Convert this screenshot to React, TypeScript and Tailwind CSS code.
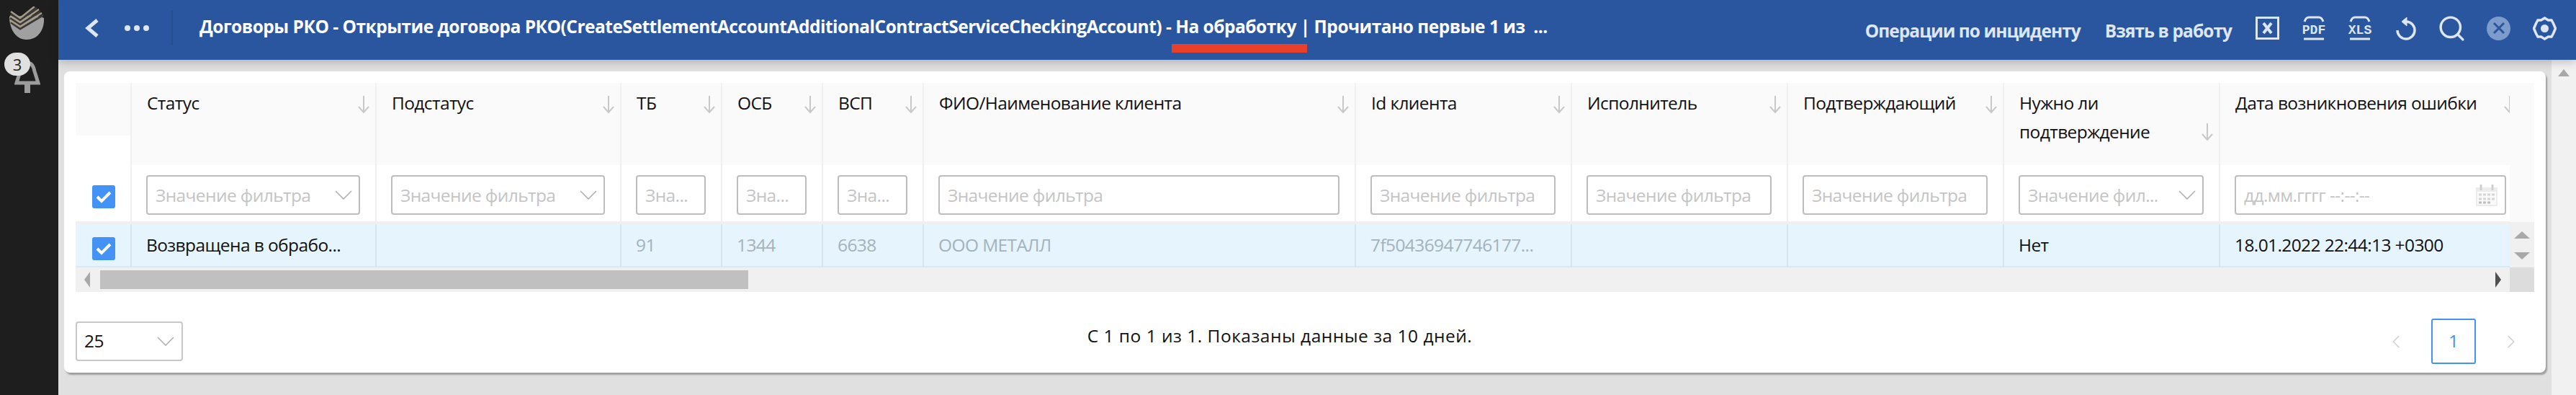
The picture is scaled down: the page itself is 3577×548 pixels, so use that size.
import { ChevronLeft, ChevronRight, Search } from "lucide-react";

const font = "font-['Open_Sans','Noto_Sans',sans-serif]";

const columns = [
  { title: "Статус", width: "w-[340px]", filter: "select", placeholder: "Значение фильтра", value: "Возвращена в обрабо..." },
  { title: "Подстатус", width: "w-[340px]", filter: "select", placeholder: "Значение фильтра", value: "" },
  { title: "ТБ", width: "w-[140px]", filter: "input", placeholder: "Зна...", value: "91", masked: true },
  { title: "ОСБ", width: "w-[140px]", filter: "input", placeholder: "Зна...", value: "1344", masked: true },
  { title: "ВСП", width: "w-[140px]", filter: "input", placeholder: "Зна...", value: "6638", masked: true },
  { title: "ФИО/Наименование клиента", width: "w-[600px]", filter: "input", placeholder: "Значение фильтра", value: "ООО МЕТАЛЛ", masked: true },
  { title: "Id клиента", width: "w-[300px]", filter: "input", placeholder: "Значение фильтра", value: "7f50436947746177...", masked: true },
  { title: "Исполнитель", width: "w-[300px]", filter: "input", placeholder: "Значение фильтра", value: "" },
  { title: "Подтверждающий", width: "w-[300px]", filter: "input", placeholder: "Значение фильтра", value: "" },
  { title: "Нужно ли подтверждение", width: "w-[300px]", filter: "select", placeholder: "Значение фил...", value: "Нет" },
  { title: "Дата возникновения ошибки", width: "w-[420px]", filter: "date", placeholder: "дд.мм.гггг --:--:--", value: "18.01.2022 22:44:13 +0300" },
];

function SortArrow({ low }: { low?: boolean }) {
  return (
    <svg className={`absolute right-[8px] ${low ? "top-[56px]" : "top-[18px]"}`} width="16" height="24" viewBox="0 0 16 24" fill="none" stroke="#c8c8c8" strokeWidth="2">
      <path d="M8 0v23M1 15l7 8 7-8" />
    </svg>
  );
}

function Check() {
  return (
    <div className="flex size-[32px] items-center justify-center rounded-[3px] bg-[#4293f5]">
      <svg width="24" height="20" viewBox="0 0 24 20" fill="none" stroke="white" strokeWidth="4">
        <path d="M3 10l6 6L21 4" />
      </svg>
    </div>
  );
}

function SelectChevron() {
  return (
    <svg width="24" height="13" viewBox="0 0 24 13" fill="none" stroke="#b0b0b0" strokeWidth="1.6" className="shrink-0">
      <path d="M1 1l11 11L23 1" />
    </svg>
  );
}

function CalendarIcon() {
  return (
    <svg width="32" height="32" viewBox="0 0 32 32" fill="none" className="shrink-0">
      <rect x="1" y="5" width="30" height="26" fill="#ececec" />
      <rect x="3" y="11" width="26" height="18" fill="#fafafa" />
      <path d="M8 1v8M24 1v8" stroke="#cfcfcf" strokeWidth="3" />
      <path d="M5 15h22M5 21h22" stroke="#d6d6d6" strokeWidth="3" strokeDasharray="4 2" />
      <path d="M5 26h16" stroke="#bdbdbd" strokeWidth="3" strokeDasharray="4 2" />
    </svg>
  );
}

function Filter({ kind, placeholder }: { kind: string; placeholder: string }) {
  return (
    <div className="flex h-[55px] w-full items-center justify-between rounded-[4px] border-2 border-[#bdbdbd] bg-white pl-[11px] pr-[9px]">
      <span className="truncate text-[24.5px] leading-[40px] tracking-[-0.6px] text-[#c4c4c4]">{placeholder}</span>
      {kind === "select" && <SelectChevron />}
      {kind === "date" && <CalendarIcon />}
    </div>
  );
}

function Table() {
  return (
    <div className="flex h-[290px] w-[3414px] flex-col text-[24.5px] tracking-[-0.6px] text-[#111]">
      <div className="flex h-[256px]">
        <div className="flex w-[3380px] flex-col overflow-hidden">
          <div className="flex h-[114px] w-max">
            <div className="h-full w-[78px] border-r-2 border-[#f0f0f0]">
              <div className="h-[73px] bg-[#fafafa]" />
            </div>
            {columns.map((c) => (
              <div key={c.title} className={`relative h-full shrink-0 border-r-2 border-[#f0f0f0] bg-[#fafafa] pl-[21px] pr-[30px] pt-[8px] leading-[40px] ${c.width}`}>
                {c.title}
                <SortArrow low={c.title === "Нужно ли подтверждение"} />
              </div>
            ))}
          </div>
          <div className="flex h-[78px] w-max">
            <div className="flex h-full w-[78px] items-center justify-center border-r-2 border-[#f0f0f0] pl-[2px] pt-[10px]">
              <Check />
            </div>
            {columns.map((c) => (
              <div key={c.title} className={`h-full shrink-0 border-r-2 border-[#f0f0f0] pl-[20px] pr-[21px] pt-[14px] ${c.width}`}>
                <Filter kind={c.filter} placeholder={c.placeholder} />
              </div>
            ))}
          </div>
          <div className="flex h-[64px] w-max border-t-4 border-[#f0f0f0]">
            <div className="flex h-full w-[78px] items-center justify-center border-b-2 border-r-2 border-b-[#d8e9f2] border-r-[#d6e6ef] bg-[#e6f5fd] pl-[2px] pt-[10px]">
              <Check />
            </div>
            {columns.map((c) => (
              <div key={c.title} className={`flex h-full shrink-0 items-center border-b-2 border-r-2 border-b-[#d8e9f2] border-r-[#d6e6ef] bg-[#e6f5fd] pl-[20px] ${c.width} ${c.masked ? "text-[#a3b2bb]" : ""}`}>
                {c.value}
              </div>
            ))}
          </div>
        </div>
        <div className="flex w-[34px] flex-col bg-[#fafafa]">
          <div className="h-[193px]" />
          <div className="flex flex-1 flex-col items-center gap-[19px] bg-[#f0f0f0] pt-[13px]">
            <div className="size-0 border-x-[11px] border-b-[10px] border-x-transparent border-b-[#a8a8a8]" />
            <div className="size-0 border-x-[11px] border-t-[10px] border-x-transparent border-t-[#a8a8a8]" />
          </div>
        </div>
      </div>
      <div className="flex h-[34px]">
        <div className="flex w-[3380px] items-center bg-[#f0f0f0]">
          <div className="ml-[12px] size-0 border-y-[11px] border-r-[8px] border-y-transparent border-r-[#a8a8a8]" />
          <div className="ml-[14px] h-[26px] w-[900px] bg-[#c0c0c0]" />
          <div className="ml-auto mr-[12px] size-0 border-y-[11px] border-l-[8px] border-y-transparent border-l-[#505050]" />
        </div>
        <div className="w-[34px] bg-[#dcdcdc]" />
      </div>
    </div>
  );
}

function Footer() {
  return (
    <div className="flex h-[112px] w-[3414px] items-center justify-between text-[24.5px] text-[#111]">
      <div className="mt-[25px] flex h-[55px] w-[149px] items-center justify-between rounded-[4px] border-2 border-[#c8c8c8] pl-[10px] pr-[10px] tracking-[-0.6px]">
        25
        <SelectChevron />
      </div>
      <div className="-ml-[12px] mt-[10px] tracking-[0.5px]">С 1 по 1 из 1. Показаны данные за 10 дней.</div>
      <div className="mr-[17px] mt-[25px] flex items-center gap-[22px]">
        <ChevronLeft className="text-[#d0d0d0]" size={30} strokeWidth={1.4} />
        <div className="mx-[12px] flex h-[63px] w-[62px] items-center justify-center rounded-[3px] border-2 border-[#4293f5] text-[#4293f5]">1</div>
        <ChevronRight className="text-[#d0d0d0]" size={30} strokeWidth={1.4} />
      </div>
    </div>
  );
}

function BadgeIcon({ label }: { label: string }) {
  return (
    <svg width="36" height="34" viewBox="0 0 36 34" fill="none" stroke="#dde6f3" strokeWidth="3">
      <path d="M5 8c1-3 3-6 6-6h14c3 0 5 3 6 6" />
      <path d="M4 32h28" />
      <text x="18" y="25" textAnchor="middle" fontFamily="'Liberation Mono',monospace" fontWeight="700" fontSize="18" fill="#dde6f3" stroke="none">
        {label}
      </text>
    </svg>
  );
}

function Header() {
  return (
    <div className="relative z-10 flex h-[83px] items-center bg-[#2a569f] shadow-[0_3px_12px_rgba(0,0,0,0.22)]">
      <svg className="mb-[6px] ml-[36px] shrink-0" width="20" height="28" viewBox="0 0 20 28" fill="none" stroke="#dde6f3" strokeWidth="5">
        <path d="M18 3L5 14l13 11" />
      </svg>
      <div className="mb-[5px] ml-[36px] flex gap-[5px]">
        <span className="size-[8px] rounded-full bg-[#dde6f3]" />
        <span className="size-[8px] rounded-full bg-[#dde6f3]" />
        <span className="size-[8px] rounded-full bg-[#dde6f3]" />
      </div>
      <div className="mb-[5px] ml-[31px] h-[48px] w-[2px] bg-[#254f91]" />
      <div className="mb-[8px] ml-[37px] whitespace-nowrap text-[24.5px] font-bold tracking-[-0.5px] text-white">
        Договоры РКО - Открытие договора РКО(CreateSettlementAccountAdditionalContractServiceCheckingAccount) - На обработку | Прочитано первые 1 из &nbsp;...
      </div>
      {/* red mark under "На обработку" */}
      <div className="absolute left-[1546px] top-[61px] h-[12px] w-[188px] bg-[#e8402a]" />
      <div className="ml-auto flex items-center pr-[27px] text-[#dde6f3]">
        <span className="mb-[-3px] whitespace-nowrap text-[24.5px] font-bold tracking-[-0.95px]">Операции по инциденту</span>
        <span className="mb-[-3px] ml-[34px] whitespace-nowrap text-[24.5px] font-bold tracking-[-0.95px]">Взять в работу</span>
        <svg className="mb-[5px] ml-[33px]" width="33" height="32" viewBox="0 0 33 32" fill="none" stroke="#dde6f3" strokeWidth="3">
          <rect x="1.5" y="1.5" width="30" height="29" />
          <path d="M11 9l11 14M22 9L11 23" strokeWidth="4" />
        </svg>
        <div className="mb-[5px] ml-[30px]"><BadgeIcon label="PDF" /></div>
        <div className="mb-[5px] ml-[28px]"><BadgeIcon label="XLS" /></div>
        <svg className="mb-[5px] ml-[32px]" width="30" height="33" viewBox="0 0 30 33" fill="none" stroke="#dde6f3" strokeWidth="3.5">
          <path d="M12 7h3a12 12 0 1 1-13 12" />
          <path d="M15 1v12L8 7z" fill="#dde6f3" strokeWidth="1" />
        </svg>
        <Search className="mb-[5px] ml-[27px] text-[#dde6f3]" size={41} strokeWidth={2} />
        <div className="mb-[5px] ml-[28px] flex size-[33px] items-center justify-center rounded-full bg-[#7e9ccb]">
          <svg width="18" height="18" viewBox="0 0 18 18" stroke="#2a569f" strokeWidth="3">
            <path d="M2 2l14 14M16 2L2 16" />
          </svg>
        </div>
        <svg className="mb-[5px] ml-[31px]" width="33" height="33" viewBox="0 0 33 33" fill="none">
          <path d="M16.5 2l5 3h4.500l2.500 4.500 3 7-3 7-2.500 4.500h-4.500l-5 3-5-3H7l-2.500-4.500-3-7 3-7L7 5h4.500z" stroke="#dde6f3" strokeWidth="3.500" />
          <circle cx="16.500" cy="16.500" r="5.500" fill="#dde6f3" />
        </svg>
      </div>
    </div>
  );
}

function Sidebar() {
  return (
    <div className="relative w-[81px] shrink-0 bg-[#1e1e1e]">
      <svg className="ml-[13px] mt-[9px]" width="48" height="46" viewBox="0 0 48 46" fill="none">
        <path d="M0 14c10 0 38-4 48 2 1 16-8 30-24 30S0 30 0 14z" fill="#a0a0a0" />
        <path d="M2 10l13 9L38 2M1 16l14 9L43 7M2 22l13 9L47 12" stroke="#3a3a3a" strokeWidth="3" />
        <path d="M2 7l13 9L35 0M1 13l14 9L41 4M1 19l14 9L45 9" stroke="#a79b85" strokeWidth="2.500" />
      </svg>
      <svg className="ml-[20px] mt-[30px]" width="36" height="44" viewBox="0 0 36 44" fill="none" stroke="#9c9c9c" strokeWidth="5">
        <path d="M18 2c6 0 9 6 10 12l5 16H3l5-16c1-6 4-12 10-12z" />
        <path d="M18 30v14" strokeWidth="8" />
      </svg>
      <div className="absolute left-[6px] top-[73px] flex h-[32px] w-[36px] items-center justify-center rounded-full bg-[#e0e0e0] text-[22px] text-[#1e1e1e]">3</div>
    </div>
  );
}

export default function App() {
  return (
    <div className={`flex h-[548px] w-[3577px] overflow-hidden ${font}`}>
      <Sidebar />
      <div className="flex min-w-0 flex-1 flex-col">
        <Header />
        <div className="flex flex-1">
          <div className="flex-1 bg-[#e0e0e0] pb-[31px] pl-[8px] pr-[8px] pt-[16px]">
            <div className="h-full rounded-[8px] bg-white pl-[16px] pt-[16px] shadow-[2px_3px_2px_#9e9e9e]">
              <Table />
              <Footer />
            </div>
          </div>
          <div className="flex w-[34px] justify-center bg-[#f1f1f1] pt-[13px]">
            <div className="size-0 border-x-[8px] border-b-[10px] border-x-transparent border-b-[#a8a8a8]" />
          </div>
        </div>
      </div>
    </div>
  );
}
